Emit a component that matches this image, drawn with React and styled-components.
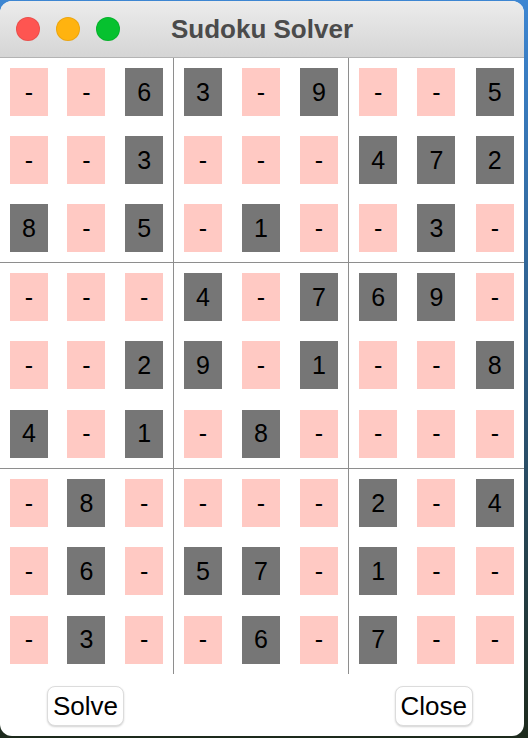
import React from 'react'
import styled, { createGlobalStyle } from 'styled-components'

const GlobalStyle = createGlobalStyle`
  html, body {
    margin: 0;
    padding: 0;
    height: 100%;
  }
  body {
    background: linear-gradient(180deg, #3d86d2 0%, #2f5f8a 45%, #1d2a1c 100%);
    font-family: "Liberation Sans", Arial, sans-serif;
  }
`

const Window = styled.div`
  width: 524px;
  height: 735px;
  margin-top: 1px;
  background: #ffffff;
  border-radius: 12px;
  overflow: hidden;
  display: flex;
  flex-direction: column;
`

const TitleBar = styled.div`
  position: relative;
  height: 56px;
  flex-shrink: 0;
  background: linear-gradient(180deg, #ececec 0%, #d5d5d5 100%);
  border-bottom: 1px solid #b3b3b3;
  display: flex;
  align-items: center;
  justify-content: center;
`

const Lights = styled.div`
  position: absolute;
  left: 16px;
  top: 16px;
  display: flex;
  gap: 16px;
`

const Light = styled.span`
  width: 24px;
  height: 24px;
  border-radius: 50%;
  background: ${p => p.color};
  box-shadow: inset 0 0 0 1px rgba(0, 0, 0, 0.08);
`

const Title = styled.div`
  font-size: 26px;
  font-weight: bold;
  color: #4b4b4b;
  margin-top: 1px;
`

const Board = styled.div`
  display: grid;
  grid-template-columns: 173px 174px 175px;
  grid-template-rows: 204px 205px 205px;
  gap: 1px;
  background: #8e8e8e;
`

const Block = styled.div`
  background: #ffffff;
  display: grid;
  grid-template-columns: repeat(3, 1fr);
  grid-template-rows: repeat(3, 1fr);
  align-items: center;
  justify-items: center;
`

const Cell = styled.div`
  width: 38px;
  height: 48px;
  background: ${p => (p.given ? '#767676' : '#ffc9c3')};
  color: #000000;
  font-size: 25px;
  display: flex;
  align-items: center;
  justify-content: center;
`

const Footer = styled.div`
  flex: 1;
  display: flex;
  align-items: flex-start;
  justify-content: space-between;
  padding: 12px 51px 0 47px;
`

const Button = styled.button`
  height: 40px;
  padding: 0 5px;
  background: #ffffff;
  border: 1px solid #dcdcdc;
  border-radius: 8px;
  box-shadow: 0 1px 2px rgba(0, 0, 0, 0.18);
  font-family: "Liberation Sans", Arial, sans-serif;
  font-size: 26px;
  color: #000000;
`

const puzzle = [
  '--6 3-9 --5',
  '--3 --- 472',
  '8-5 -1- -3-',
  '--- 4-7 69-',
  '--2 9-1 --8',
  '4-1 -8- ---',
  '-8- --- 2-4',
  '-6- 57- 1--',
  '-3- -6- 7--',
].map(r => r.replace(/ /g, '').split(''))

const blockCells = (b) => {
  const br = Math.floor(b / 3) * 3
  const bc = (b % 3) * 3
  const out = []
  for (let r = 0; r < 3; r++) {
    for (let c = 0; c < 3; c++) out.push(puzzle[br + r][bc + c])
  }
  return out
}

const App = () => {
  return (
    <>
      <GlobalStyle />
      <Window>
        <TitleBar>
          <Lights>
            <Light color="#fe5551" />
            <Light color="#ffb30f" />
            <Light color="#06c12f" />
          </Lights>
          <Title>Sudoku Solver</Title>
        </TitleBar>
        <Board>
          {[0, 1, 2, 3, 4, 5, 6, 7, 8].map(b => (
            <Block key={b}>
              {blockCells(b).map((v, i) => (
                <Cell key={i} given={v !== '-'}>{v}</Cell>
              ))}
            </Block>
          ))}
        </Board>
        <Footer>
          <Button>Solve</Button>
          <Button>Close</Button>
        </Footer>
      </Window>
    </>
  )
}

export default App
